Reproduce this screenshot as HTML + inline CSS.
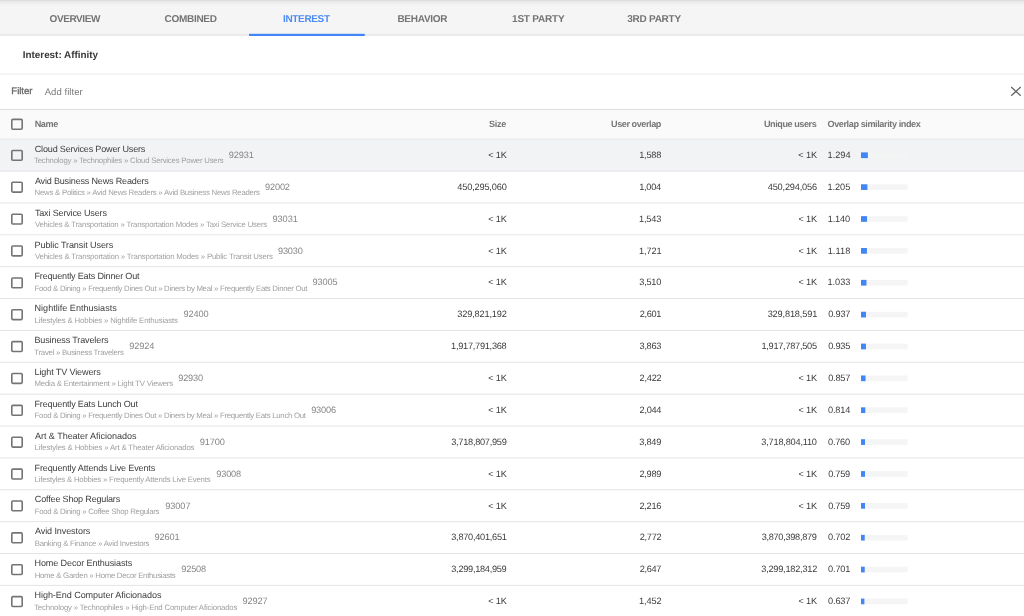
<!DOCTYPE html>
<html><head><meta charset="utf-8"><title>Interest: Affinity</title>
<style>
html,body{margin:0;padding:0;}
body{width:1024px;height:616px;overflow:hidden;background:#fff;position:relative;font-family:"Liberation Sans",sans-serif;text-rendering:geometricPrecision;}
.t{position:absolute;white-space:pre;line-height:1;margin:0;padding:0;}
.a{position:absolute;}
</style></head><body>

<svg class="a" style="left:0;top:0;" width="1024" height="616" viewBox="0 0 1024 616"><defs><linearGradient id="g1" x1="0" y1="0" x2="0" y2="1"><stop offset="0" stop-color="#d9d9d9"/><stop offset="0.3" stop-color="#ebebeb"/><stop offset="1" stop-color="#f5f5f5"/></linearGradient><linearGradient id="g2" x1="0" y1="0" x2="0" y2="1"><stop offset="0" stop-color="#f5f5f5"/><stop offset="1" stop-color="#e2e2e2"/></linearGradient></defs><rect x="0.00" y="0.00" width="1024.00" height="35.60" fill="#f5f5f5"/><rect x="0.00" y="0.00" width="1024.00" height="6.00" fill="url(#g1)"/><rect x="0.00" y="33.20" width="1024.00" height="2.40" fill="url(#g2)"/><rect x="249.00" y="33.80" width="115.80" height="2.20" fill="#4285f4"/><rect x="0.00" y="73.50" width="1024.00" height="1.00" fill="#e9e9e9"/><rect x="0.00" y="108.95" width="1024.00" height="1.05" fill="#dfe0e0"/><rect x="0.00" y="110.00" width="1024.00" height="29.20" fill="#fafafa"/><rect x="0.00" y="139.20" width="1024.00" height="31.87" fill="#f1f3f4"/><rect x="0.00" y="138.70" width="1024.00" height="1.00" fill="#e6e6e6"/><rect x="0.00" y="170.57" width="1024.00" height="1.00" fill="#e3e4e6"/><rect x="0.00" y="202.44" width="1024.00" height="1.00" fill="#e3e4e6"/><rect x="0.00" y="234.31" width="1024.00" height="1.00" fill="#e3e4e6"/><rect x="0.00" y="266.18" width="1024.00" height="1.00" fill="#e3e4e6"/><rect x="0.00" y="298.05" width="1024.00" height="1.00" fill="#e3e4e6"/><rect x="0.00" y="329.92" width="1024.00" height="1.00" fill="#e3e4e6"/><rect x="0.00" y="361.79" width="1024.00" height="1.00" fill="#e3e4e6"/><rect x="0.00" y="393.66" width="1024.00" height="1.00" fill="#e3e4e6"/><rect x="0.00" y="425.53" width="1024.00" height="1.00" fill="#e3e4e6"/><rect x="0.00" y="457.40" width="1024.00" height="1.00" fill="#e3e4e6"/><rect x="0.00" y="489.27" width="1024.00" height="1.00" fill="#e3e4e6"/><rect x="0.00" y="521.14" width="1024.00" height="1.00" fill="#e3e4e6"/><rect x="0.00" y="553.01" width="1024.00" height="1.00" fill="#e3e4e6"/><rect x="0.00" y="584.88" width="1024.00" height="1.00" fill="#e3e4e6"/><rect x="0.00" y="616.75" width="1024.00" height="1.00" fill="#e3e4e6"/><rect x="11.8" y="119.40" width="10.4" height="9.8" rx="1.0" fill="none" stroke="#747474" stroke-width="1.6"/><rect x="11.8" y="150.45" width="10.4" height="9.8" rx="1.0" fill="none" stroke="#747474" stroke-width="1.6"/><rect x="861.00" y="152.40" width="46.60" height="5.70" fill="#f3f4f4"/><rect x="861.00" y="152.40" width="6.86" height="5.70" fill="#4285f4"/><rect x="11.8" y="182.32" width="10.4" height="9.8" rx="1.0" fill="none" stroke="#747474" stroke-width="1.6"/><rect x="861.00" y="184.27" width="46.60" height="5.70" fill="#f5f5f5"/><rect x="861.00" y="184.27" width="6.39" height="5.70" fill="#4285f4"/><rect x="11.8" y="214.19" width="10.4" height="9.8" rx="1.0" fill="none" stroke="#747474" stroke-width="1.6"/><rect x="861.00" y="216.14" width="46.60" height="5.70" fill="#f5f5f5"/><rect x="861.00" y="216.14" width="6.04" height="5.70" fill="#4285f4"/><rect x="11.8" y="246.06" width="10.4" height="9.8" rx="1.0" fill="none" stroke="#747474" stroke-width="1.6"/><rect x="861.00" y="248.01" width="46.60" height="5.70" fill="#f5f5f5"/><rect x="861.00" y="248.01" width="5.93" height="5.70" fill="#4285f4"/><rect x="11.8" y="277.93" width="10.4" height="9.8" rx="1.0" fill="none" stroke="#747474" stroke-width="1.6"/><rect x="861.00" y="279.88" width="46.60" height="5.70" fill="#f5f5f5"/><rect x="861.00" y="279.88" width="5.47" height="5.70" fill="#4285f4"/><rect x="11.8" y="309.80" width="10.4" height="9.8" rx="1.0" fill="none" stroke="#747474" stroke-width="1.6"/><rect x="861.00" y="311.75" width="46.60" height="5.70" fill="#f5f5f5"/><rect x="861.00" y="311.75" width="4.97" height="5.70" fill="#4285f4"/><rect x="11.8" y="341.67" width="10.4" height="9.8" rx="1.0" fill="none" stroke="#747474" stroke-width="1.6"/><rect x="861.00" y="343.62" width="46.60" height="5.70" fill="#f5f5f5"/><rect x="861.00" y="343.62" width="4.96" height="5.70" fill="#4285f4"/><rect x="11.8" y="373.54" width="10.4" height="9.8" rx="1.0" fill="none" stroke="#747474" stroke-width="1.6"/><rect x="861.00" y="375.49" width="46.60" height="5.70" fill="#f5f5f5"/><rect x="861.00" y="375.49" width="4.54" height="5.70" fill="#4285f4"/><rect x="11.8" y="405.41" width="10.4" height="9.8" rx="1.0" fill="none" stroke="#747474" stroke-width="1.6"/><rect x="861.00" y="407.36" width="46.60" height="5.70" fill="#f5f5f5"/><rect x="861.00" y="407.36" width="4.31" height="5.70" fill="#4285f4"/><rect x="11.8" y="437.28" width="10.4" height="9.8" rx="1.0" fill="none" stroke="#747474" stroke-width="1.6"/><rect x="861.00" y="439.23" width="46.60" height="5.70" fill="#f5f5f5"/><rect x="861.00" y="439.23" width="4.03" height="5.70" fill="#4285f4"/><rect x="11.8" y="469.15" width="10.4" height="9.8" rx="1.0" fill="none" stroke="#747474" stroke-width="1.6"/><rect x="861.00" y="471.10" width="46.60" height="5.70" fill="#f5f5f5"/><rect x="861.00" y="471.10" width="4.02" height="5.70" fill="#4285f4"/><rect x="11.8" y="501.02" width="10.4" height="9.8" rx="1.0" fill="none" stroke="#747474" stroke-width="1.6"/><rect x="861.00" y="502.97" width="46.60" height="5.70" fill="#f5f5f5"/><rect x="861.00" y="502.97" width="4.02" height="5.70" fill="#4285f4"/><rect x="11.8" y="532.89" width="10.4" height="9.8" rx="1.0" fill="none" stroke="#747474" stroke-width="1.6"/><rect x="861.00" y="534.84" width="46.60" height="5.70" fill="#f5f5f5"/><rect x="861.00" y="534.84" width="3.72" height="5.70" fill="#4285f4"/><rect x="11.8" y="564.76" width="10.4" height="9.8" rx="1.0" fill="none" stroke="#747474" stroke-width="1.6"/><rect x="861.00" y="566.71" width="46.60" height="5.70" fill="#f5f5f5"/><rect x="861.00" y="566.71" width="3.72" height="5.70" fill="#4285f4"/><rect x="11.8" y="596.63" width="10.4" height="9.8" rx="1.0" fill="none" stroke="#747474" stroke-width="1.6"/><rect x="861.00" y="598.58" width="46.60" height="5.70" fill="#f5f5f5"/><rect x="861.00" y="598.58" width="3.38" height="5.70" fill="#4285f4"/><path d="M1011.2 87 L1020.7 95.8 M1020.7 87 L1011.2 95.8" stroke="#666" stroke-width="1.3" fill="none"/></svg>
<div id="tx" style="position:absolute;left:0;top:0;width:1024px;height:616px;will-change:transform;">
<span class="t" id="t0" style="left:49.57px;top:15.00px;font-size:10.00px;color:#747474;font-weight:bold;letter-spacing:-0.406px;">OVERVIEW</span>
<span class="t" id="t1" style="left:164.50px;top:15.00px;font-size:10.00px;color:#747474;font-weight:bold;letter-spacing:-0.288px;">COMBINED</span>
<span class="t" id="t2" style="left:283.07px;top:15.00px;font-size:10.00px;color:#4c8bf5;font-weight:bold;letter-spacing:-0.354px;">INTEREST</span>
<span class="t" id="t3" style="left:397.39px;top:15.00px;font-size:10.00px;color:#747474;font-weight:bold;letter-spacing:-0.262px;">BEHAVIOR</span>
<span class="t" id="t4" style="left:512.07px;top:15.00px;font-size:10.00px;color:#747474;font-weight:bold;letter-spacing:-0.219px;">1ST PARTY</span>
<span class="t" id="t5" style="left:627.24px;top:15.00px;font-size:10.00px;color:#747474;font-weight:bold;letter-spacing:-0.260px;">3RD PARTY</span>
<span class="t" id="t6" style="left:22.74px;top:51.00px;font-size:9.90px;color:#383838;font-weight:bold;letter-spacing:-0.001px;">Interest: Affinity</span>
<span class="t" id="t7" style="left:11.35px;top:87.00px;font-size:9.60px;color:#666;letter-spacing:-0.033px;-webkit-text-stroke:0.3px #666;">Filter</span>
<span class="t" id="t8" style="left:44.72px;top:88.00px;font-size:9.50px;color:#7a7a7a;letter-spacing:0.048px;">Add filter</span>
<span class="t" id="t9" style="left:34.67px;top:120.00px;font-size:9.10px;color:#757575;font-weight:bold;letter-spacing:-0.378px;">Name</span>
<span class="t" id="t10" style="left:488.95px;top:120.00px;font-size:9.10px;color:#757575;font-weight:bold;letter-spacing:-0.253px;">Size</span>
<span class="t" id="t11" style="left:611.02px;top:120.00px;font-size:9.10px;color:#757575;font-weight:bold;letter-spacing:-0.433px;">User overlap</span>
<span class="t" id="t12" style="left:763.92px;top:120.00px;font-size:9.10px;color:#757575;font-weight:bold;letter-spacing:-0.430px;">Unique users</span>
<span class="t" id="t13" style="left:827.50px;top:120.00px;font-size:9.10px;color:#757575;font-weight:bold;letter-spacing:-0.405px;">Overlap similarity index</span>
<span class="t" id="t14" style="left:34.76px;top:145.00px;font-size:9.05px;color:#404040;letter-spacing:-0.182px;">Cloud Services Power Users</span>
<span class="t" id="t15" style="left:34.04px;top:157.00px;font-size:7.80px;color:#a0a0a0;letter-spacing:-0.221px;">Technology » Technophiles » Cloud Services Power Users</span>
<span class="t" id="t16" style="left:228.81px;top:151.00px;font-size:9.20px;color:#858585;letter-spacing:-0.107px;">92931</span>
<span class="t" id="t17" style="left:488.21px;top:151.00px;font-size:9.20px;color:#3a3a3a;letter-spacing:-0.179px;">&lt; 1K</span>
<span class="t" id="t18" style="left:639.21px;top:151.00px;font-size:9.20px;color:#3a3a3a;letter-spacing:-0.204px;">1,588</span>
<span class="t" id="t19" style="left:798.36px;top:151.00px;font-size:9.20px;color:#3a3a3a;letter-spacing:-0.112px;">&lt; 1K</span>
<span class="t" id="t20" style="left:827.50px;top:151.00px;font-size:9.20px;color:#3a3a3a;letter-spacing:0.019px;">1.294</span>
<span class="t" id="t21" style="left:34.88px;top:177.00px;font-size:9.05px;color:#404040;letter-spacing:-0.181px;">Avid Business News Readers</span>
<span class="t" id="t22" style="left:34.62px;top:189.00px;font-size:7.80px;color:#a0a0a0;letter-spacing:-0.243px;">News &amp; Politics » Avid News Readers » Avid Business News Readers</span>
<span class="t" id="t23" style="left:265.11px;top:183.00px;font-size:9.20px;color:#858585;letter-spacing:-0.175px;">92002</span>
<span class="t" id="t24" style="left:457.35px;top:183.00px;font-size:9.20px;color:#3a3a3a;letter-spacing:-0.169px;">450,295,060</span>
<span class="t" id="t25" style="left:639.16px;top:183.00px;font-size:9.20px;color:#3a3a3a;letter-spacing:-0.231px;">1,004</span>
<span class="t" id="t26" style="left:767.76px;top:183.00px;font-size:9.20px;color:#3a3a3a;letter-spacing:-0.178px;">450,294,056</span>
<span class="t" id="t27" style="left:827.52px;top:183.00px;font-size:9.20px;color:#3a3a3a;letter-spacing:-0.056px;">1.205</span>
<span class="t" id="t28" style="left:34.91px;top:209.00px;font-size:9.05px;color:#404040;letter-spacing:-0.171px;">Taxi Service Users</span>
<span class="t" id="t29" style="left:34.89px;top:221.00px;font-size:7.80px;color:#a0a0a0;letter-spacing:-0.194px;">Vehicles &amp; Transportation » Transportation Modes » Taxi Service Users</span>
<span class="t" id="t30" style="left:272.56px;top:215.00px;font-size:9.20px;color:#858585;letter-spacing:-0.079px;">93031</span>
<span class="t" id="t31" style="left:488.17px;top:215.00px;font-size:9.20px;color:#3a3a3a;letter-spacing:-0.157px;">&lt; 1K</span>
<span class="t" id="t32" style="left:639.08px;top:215.00px;font-size:9.20px;color:#3a3a3a;letter-spacing:-0.201px;">1,543</span>
<span class="t" id="t33" style="left:798.61px;top:215.00px;font-size:9.20px;color:#3a3a3a;letter-spacing:-0.252px;">&lt; 1K</span>
<span class="t" id="t34" style="left:827.67px;top:215.00px;font-size:9.20px;color:#3a3a3a;letter-spacing:-0.116px;">1.140</span>
<span class="t" id="t35" style="left:34.52px;top:241.00px;font-size:9.05px;color:#404040;letter-spacing:-0.089px;">Public Transit Users</span>
<span class="t" id="t36" style="left:34.90px;top:253.00px;font-size:7.80px;color:#a0a0a0;letter-spacing:-0.179px;">Vehicles &amp; Transportation » Transportation Modes » Public Transit Users</span>
<span class="t" id="t37" style="left:277.98px;top:247.00px;font-size:9.20px;color:#858585;letter-spacing:-0.186px;">93030</span>
<span class="t" id="t38" style="left:488.17px;top:247.00px;font-size:9.20px;color:#3a3a3a;letter-spacing:-0.157px;">&lt; 1K</span>
<span class="t" id="t39" style="left:639.12px;top:247.00px;font-size:9.20px;color:#3a3a3a;letter-spacing:-0.118px;">1,721</span>
<span class="t" id="t40" style="left:798.61px;top:247.00px;font-size:9.20px;color:#3a3a3a;letter-spacing:-0.252px;">&lt; 1K</span>
<span class="t" id="t41" style="left:827.65px;top:247.00px;font-size:9.20px;color:#3a3a3a;letter-spacing:0.088px;">1.118</span>
<span class="t" id="t42" style="left:34.48px;top:272.00px;font-size:9.05px;color:#404040;letter-spacing:-0.183px;">Frequently Eats Dinner Out</span>
<span class="t" id="t43" style="left:34.57px;top:285.00px;font-size:7.80px;color:#a0a0a0;letter-spacing:-0.279px;">Food &amp; Dining » Frequently Dines Out » Diners by Meal » Frequently Eats Dinner Out</span>
<span class="t" id="t44" style="left:312.42px;top:278.00px;font-size:9.20px;color:#858585;letter-spacing:-0.096px;">93005</span>
<span class="t" id="t45" style="left:488.17px;top:278.00px;font-size:9.20px;color:#3a3a3a;letter-spacing:-0.157px;">&lt; 1K</span>
<span class="t" id="t46" style="left:639.35px;top:278.00px;font-size:9.20px;color:#3a3a3a;letter-spacing:-0.273px;">3,510</span>
<span class="t" id="t47" style="left:798.61px;top:278.00px;font-size:9.20px;color:#3a3a3a;letter-spacing:-0.252px;">&lt; 1K</span>
<span class="t" id="t48" style="left:827.54px;top:278.00px;font-size:9.20px;color:#3a3a3a;letter-spacing:-0.056px;">1.033</span>
<span class="t" id="t49" style="left:34.52px;top:304.00px;font-size:9.05px;color:#404040;letter-spacing:0.012px;">Nightlife Enthusiasts</span>
<span class="t" id="t50" style="left:34.54px;top:317.00px;font-size:7.80px;color:#a0a0a0;letter-spacing:-0.154px;">Lifestyles &amp; Hobbies » Nightlife Enthusiasts</span>
<span class="t" id="t51" style="left:183.46px;top:310.00px;font-size:9.20px;color:#858585;letter-spacing:-0.071px;">92400</span>
<span class="t" id="t52" style="left:457.31px;top:310.00px;font-size:9.20px;color:#3a3a3a;letter-spacing:-0.152px;">329,821,192</span>
<span class="t" id="t53" style="left:639.71px;top:310.00px;font-size:9.20px;color:#3a3a3a;letter-spacing:-0.308px;">2,601</span>
<span class="t" id="t54" style="left:767.63px;top:310.00px;font-size:9.20px;color:#3a3a3a;letter-spacing:-0.147px;">329,818,591</span>
<span class="t" id="t55" style="left:828.20px;top:310.00px;font-size:9.20px;color:#3a3a3a;letter-spacing:-0.181px;">0.937</span>
<span class="t" id="t56" style="left:34.45px;top:336.00px;font-size:9.05px;color:#404040;letter-spacing:-0.137px;">Business Travelers</span>
<span class="t" id="t57" style="left:34.25px;top:349.00px;font-size:7.80px;color:#a0a0a0;letter-spacing:-0.242px;">Travel » Business Travelers</span>
<span class="t" id="t58" style="left:129.20px;top:342.00px;font-size:9.20px;color:#858585;letter-spacing:-0.073px;">92924</span>
<span class="t" id="t59" style="left:451.08px;top:342.00px;font-size:9.20px;color:#3a3a3a;letter-spacing:-0.260px;">1,917,791,368</span>
<span class="t" id="t60" style="left:639.61px;top:342.00px;font-size:9.20px;color:#3a3a3a;letter-spacing:-0.334px;">3,863</span>
<span class="t" id="t61" style="left:761.46px;top:342.00px;font-size:9.20px;color:#3a3a3a;letter-spacing:-0.265px;">1,917,787,505</span>
<span class="t" id="t62" style="left:828.20px;top:342.00px;font-size:9.20px;color:#3a3a3a;letter-spacing:-0.228px;">0.935</span>
<span class="t" id="t63" style="left:34.51px;top:368.00px;font-size:9.05px;color:#404040;letter-spacing:-0.119px;">Light TV Viewers</span>
<span class="t" id="t64" style="left:34.57px;top:380.00px;font-size:7.80px;color:#a0a0a0;letter-spacing:-0.206px;">Media &amp; Entertainment » Light TV Viewers</span>
<span class="t" id="t65" style="left:178.20px;top:374.00px;font-size:9.20px;color:#858585;letter-spacing:-0.144px;">92930</span>
<span class="t" id="t66" style="left:488.17px;top:374.00px;font-size:9.20px;color:#3a3a3a;letter-spacing:-0.157px;">&lt; 1K</span>
<span class="t" id="t67" style="left:639.62px;top:374.00px;font-size:9.20px;color:#3a3a3a;letter-spacing:-0.232px;">2,422</span>
<span class="t" id="t68" style="left:798.61px;top:374.00px;font-size:9.20px;color:#3a3a3a;letter-spacing:-0.252px;">&lt; 1K</span>
<span class="t" id="t69" style="left:828.21px;top:374.00px;font-size:9.20px;color:#3a3a3a;letter-spacing:-0.202px;">0.857</span>
<span class="t" id="t70" style="left:34.53px;top:400.00px;font-size:9.05px;color:#404040;letter-spacing:-0.173px;">Frequently Eats Lunch Out</span>
<span class="t" id="t71" style="left:34.60px;top:412.00px;font-size:7.80px;color:#a0a0a0;letter-spacing:-0.281px;">Food &amp; Dining » Frequently Dines Out » Diners by Meal » Frequently Eats Lunch Out</span>
<span class="t" id="t72" style="left:311.17px;top:406.00px;font-size:9.20px;color:#858585;letter-spacing:-0.148px;">93006</span>
<span class="t" id="t73" style="left:488.17px;top:406.00px;font-size:9.20px;color:#3a3a3a;letter-spacing:-0.157px;">&lt; 1K</span>
<span class="t" id="t74" style="left:639.54px;top:406.00px;font-size:9.20px;color:#3a3a3a;letter-spacing:-0.262px;">2,044</span>
<span class="t" id="t75" style="left:798.61px;top:406.00px;font-size:9.20px;color:#3a3a3a;letter-spacing:-0.252px;">&lt; 1K</span>
<span class="t" id="t76" style="left:827.95px;top:406.00px;font-size:9.20px;color:#3a3a3a;letter-spacing:-0.115px;">0.814</span>
<span class="t" id="t77" style="left:34.94px;top:432.00px;font-size:9.05px;color:#404040;letter-spacing:-0.040px;">Art &amp; Theater Aficionados</span>
<span class="t" id="t78" style="left:34.60px;top:444.00px;font-size:7.80px;color:#a0a0a0;letter-spacing:-0.154px;">Lifestyles &amp; Hobbies » Art &amp; Theater Aficionados</span>
<span class="t" id="t79" style="left:199.86px;top:438.00px;font-size:9.20px;color:#858585;letter-spacing:-0.162px;">91700</span>
<span class="t" id="t80" style="left:451.25px;top:438.00px;font-size:9.20px;color:#3a3a3a;letter-spacing:-0.270px;">3,718,807,959</span>
<span class="t" id="t81" style="left:639.32px;top:438.00px;font-size:9.20px;color:#3a3a3a;letter-spacing:-0.267px;">3,849</span>
<span class="t" id="t82" style="left:761.34px;top:438.00px;font-size:9.20px;color:#3a3a3a;letter-spacing:-0.202px;">3,718,804,110</span>
<span class="t" id="t83" style="left:828.08px;top:438.00px;font-size:9.20px;color:#3a3a3a;letter-spacing:-0.254px;">0.760</span>
<span class="t" id="t84" style="left:34.51px;top:464.00px;font-size:9.05px;color:#404040;letter-spacing:-0.136px;">Frequently Attends Live Events</span>
<span class="t" id="t85" style="left:34.56px;top:476.00px;font-size:7.80px;color:#a0a0a0;letter-spacing:-0.208px;">Lifestyles &amp; Hobbies » Frequently Attends Live Events</span>
<span class="t" id="t86" style="left:216.21px;top:470.00px;font-size:9.20px;color:#858585;letter-spacing:-0.137px;">93008</span>
<span class="t" id="t87" style="left:488.17px;top:470.00px;font-size:9.20px;color:#3a3a3a;letter-spacing:-0.157px;">&lt; 1K</span>
<span class="t" id="t88" style="left:639.59px;top:470.00px;font-size:9.20px;color:#3a3a3a;letter-spacing:-0.325px;">2,989</span>
<span class="t" id="t89" style="left:798.61px;top:470.00px;font-size:9.20px;color:#3a3a3a;letter-spacing:-0.252px;">&lt; 1K</span>
<span class="t" id="t90" style="left:828.27px;top:470.00px;font-size:9.20px;color:#3a3a3a;letter-spacing:-0.297px;">0.759</span>
<span class="t" id="t91" style="left:34.83px;top:495.00px;font-size:9.05px;color:#404040;letter-spacing:-0.182px;">Coffee Shop Regulars</span>
<span class="t" id="t92" style="left:34.68px;top:508.00px;font-size:7.80px;color:#a0a0a0;letter-spacing:-0.281px;">Food &amp; Dining » Coffee Shop Regulars</span>
<span class="t" id="t93" style="left:165.17px;top:502.00px;font-size:9.20px;color:#858585;letter-spacing:-0.053px;">93007</span>
<span class="t" id="t94" style="left:488.17px;top:502.00px;font-size:9.20px;color:#3a3a3a;letter-spacing:-0.157px;">&lt; 1K</span>
<span class="t" id="t95" style="left:639.57px;top:502.00px;font-size:9.20px;color:#3a3a3a;letter-spacing:-0.319px;">2,216</span>
<span class="t" id="t96" style="left:798.61px;top:502.00px;font-size:9.20px;color:#3a3a3a;letter-spacing:-0.252px;">&lt; 1K</span>
<span class="t" id="t97" style="left:828.27px;top:502.00px;font-size:9.20px;color:#3a3a3a;letter-spacing:-0.297px;">0.759</span>
<span class="t" id="t98" style="left:34.96px;top:527.00px;font-size:9.05px;color:#404040;letter-spacing:-0.098px;">Avid Investors</span>
<span class="t" id="t99" style="left:34.69px;top:540.00px;font-size:7.80px;color:#a0a0a0;letter-spacing:-0.233px;">Banking &amp; Finance » Avid Investors</span>
<span class="t" id="t100" style="left:154.40px;top:533.00px;font-size:9.20px;color:#858585;letter-spacing:-0.068px;">92601</span>
<span class="t" id="t101" style="left:451.26px;top:533.00px;font-size:9.20px;color:#3a3a3a;letter-spacing:-0.258px;">3,870,401,651</span>
<span class="t" id="t102" style="left:639.64px;top:533.00px;font-size:9.20px;color:#3a3a3a;letter-spacing:-0.243px;">2,772</span>
<span class="t" id="t103" style="left:761.66px;top:533.00px;font-size:9.20px;color:#3a3a3a;letter-spacing:-0.291px;">3,870,398,879</span>
<span class="t" id="t104" style="left:827.96px;top:533.00px;font-size:9.20px;color:#3a3a3a;letter-spacing:-0.133px;">0.702</span>
<span class="t" id="t105" style="left:34.48px;top:559.00px;font-size:9.05px;color:#404040;letter-spacing:-0.106px;">Home Decor Enthusiasts</span>
<span class="t" id="t106" style="left:34.71px;top:572.00px;font-size:7.80px;color:#a0a0a0;letter-spacing:-0.277px;">Home &amp; Garden » Home Decor Enthusiasts</span>
<span class="t" id="t107" style="left:181.18px;top:565.00px;font-size:9.20px;color:#858585;letter-spacing:-0.127px;">92508</span>
<span class="t" id="t108" style="left:451.28px;top:565.00px;font-size:9.20px;color:#3a3a3a;letter-spacing:-0.276px;">3,299,184,959</span>
<span class="t" id="t109" style="left:639.64px;top:565.00px;font-size:9.20px;color:#3a3a3a;letter-spacing:-0.294px;">2,647</span>
<span class="t" id="t110" style="left:761.29px;top:565.00px;font-size:9.20px;color:#3a3a3a;letter-spacing:-0.231px;">3,299,182,312</span>
<span class="t" id="t111" style="left:828.02px;top:565.00px;font-size:9.20px;color:#3a3a3a;letter-spacing:-0.145px;">0.701</span>
<span class="t" id="t112" style="left:34.52px;top:591.00px;font-size:9.05px;color:#404040;letter-spacing:-0.063px;">High-End Computer Aficionados</span>
<span class="t" id="t113" style="left:34.13px;top:604.00px;font-size:7.80px;color:#a0a0a0;letter-spacing:-0.175px;">Technology » Technophiles » High-End Computer Aficionados</span>
<span class="t" id="t114" style="left:242.40px;top:597.00px;font-size:9.20px;color:#858585;letter-spacing:-0.054px;">92927</span>
<span class="t" id="t115" style="left:488.17px;top:597.00px;font-size:9.20px;color:#3a3a3a;letter-spacing:-0.157px;">&lt; 1K</span>
<span class="t" id="t116" style="left:639.04px;top:597.00px;font-size:9.20px;color:#3a3a3a;letter-spacing:-0.103px;">1,452</span>
<span class="t" id="t117" style="left:798.61px;top:597.00px;font-size:9.20px;color:#3a3a3a;letter-spacing:-0.252px;">&lt; 1K</span>
<span class="t" id="t118" style="left:828.05px;top:597.00px;font-size:9.20px;color:#3a3a3a;letter-spacing:-0.158px;">0.637</span>
</div>
</body></html>
